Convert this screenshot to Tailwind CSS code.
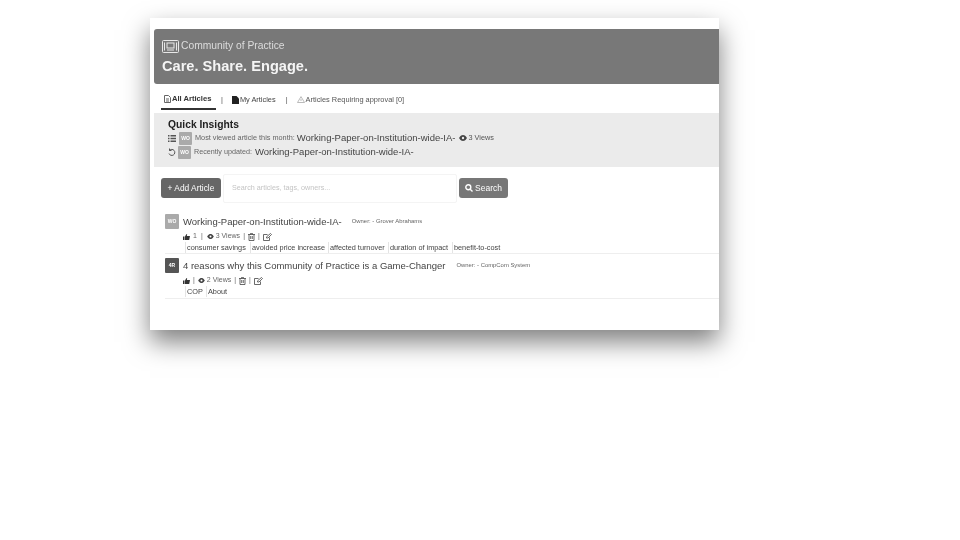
<!DOCTYPE html>
<html><head><meta charset="utf-8"><script src="https://cdn.jsdelivr.net/npm/@tailwindcss/browser@4"></script></head>
<body class="bg-white overflow-hidden">
<div class="w-[960px] h-[540px] pt-[18px] pl-[150px] font-['Liberation_Sans',sans-serif]">
<div class="w-[569px] h-[312px] bg-white shadow-[0_12px_24px_rgba(0,0,0,0.5)] pt-[11px] pl-[4px] blur-[0.7px] overflow-hidden">
  <div class="h-[55px] bg-[#787878] rounded-l-[3px] pl-[8px] pt-[9px] text-white">
    <div class="flex items-center gap-[2px] h-[16px] text-[10.300px] text-[#dcdcdc]">
      <svg width="17" height="13" viewBox="0 0 17 13" fill="none" stroke="#e8e8e8" stroke-width="1"><rect x=".5" y=".5" width="16" height="12" rx="1"/><path d="M2.500 2.500v8M14.500 2.500v8"/><rect x="5" y="3" width="7" height="5"/><path d="M5 10h7"/></svg>
      <span>Community of Practice</span>
    </div>
    <div class="text-[14.600px] leading-[18px] font-bold mt-[3px] text-[#f4f4f4]">Care. Share. Engage.</div>
  </div>
  <div class="flex items-end h-[26px] pl-[7px] text-[7.400px] text-[#444]">
    <div class="w-[55px] h-[20px] border-b-2 border-[#333] flex items-center pl-[3px] gap-[1px] font-bold text-[7.600px] text-[#333]">
      <svg width="7" height="8" viewBox="0 0 7 8" fill="none" stroke="#666"><path d="M.5.5h4l2 2v5h-6zM2 4h3M2 6h3"/></svg><span>All Articles</span>
    </div>
    <div class="h-[20px] flex items-center"><span class="ml-[5px] text-[#555]">|</span>
    <div class="ml-[9px] flex items-center gap-[1px]"><svg width="7" height="8" viewBox="0 0 7 8" fill="#222"><path d="M0 0h4.500l2.500 2.500V8H0z"/></svg><span>My Articles</span></div>
    <span class="ml-[10px] text-[#555]">|</span>
    <div class="ml-[9px] flex items-center gap-[1px] text-[#555]"><svg width="8" height="7" viewBox="0 0 8 7" fill="none" stroke="#aaa" stroke-width=".8"><path d="M4 .6 7.500 6.500h-7zM4 3v2"/></svg><span>Articles Requiring approval [0]</span></div></div>
  </div>
  <div class="h-[54px] bg-[#ebebeb] mt-[3px] pl-[14px] pt-[6px] text-[#333]">
    <div class="text-[10.300px] leading-[12px] font-bold text-[#222]">Quick Insights</div>
    <div class="flex items-center h-[14px]">
      <svg width="8" height="7" viewBox="0 0 8 7" fill="#555"><path d="M0 0h1.500v1.500H0zM2.500 0H8v1.500H2.500zM0 2.700h1.500v1.500H0zM2.500 2.700H8v1.500H2.500zM0 5.400h1.500v1.500H0zM2.500 5.400H8v1.500H2.500z"/></svg>
      <div class="w-[13px] h-[13px] rounded-[1px] bg-[#aaa] ml-[3px] text-[5px] leading-[13px] font-bold text-white text-center">WO</div>
      <span class="text-[7.300px] ml-[3px] text-[#666]">Most viewed article this month:</span>
      <span class="text-[9.500px] ml-[2px] text-[#444]">Working-Paper-on-Institution-wide-IA-</span>
      <svg class="ml-[3px]" width="8" height="6" viewBox="0 0 8 6" fill="#444"><path d="M0 3C1.500.6 2.800 0 4 0s2.500.6 4 3C6.500 5.400 5.200 6 4 6S1.500 5.400 0 3z"/><circle cx="4" cy="3" r="1.200" fill="#ebebeb"/></svg>
      <span class="text-[7.300px] ml-[2px] text-[#555]">3 Views</span>
    </div>
    <div class="flex items-center h-[14px]">
      <svg width="8" height="9" viewBox="0 0 8 9" fill="none" stroke="#555"><path d="M1.500 2.500A3 3 0 1 1 1 5.500M1.500.5v2h2"/></svg>
      <div class="w-[13px] h-[13px] rounded-[1px] bg-[#aaa] ml-[2px] text-[5px] leading-[13px] font-bold text-white text-center">WO</div>
      <span class="text-[7.200px] ml-[3px] text-[#666]">Recently updated:</span>
      <span class="text-[9.500px] ml-[3px] text-[#444]">Working-Paper-on-Institution-wide-IA-</span>
    </div>
  </div>
  <div class="flex items-center mt-[6px] pl-[7px] h-[30px]">
    <div class="w-[60px] h-[20px] rounded-[3px] bg-[#666] text-white text-[8.400px] leading-[20px] text-center">+ Add Article</div>
    <div class="w-[234px] h-[29px] ml-[2px] bg-white border border-[#f4f4f4] rounded-[2px] pl-[8px] text-[7.200px] leading-[26px] text-[#c4c4c4]">Search articles, tags, owners...</div>
    <div class="w-[49px] h-[20px] ml-[2px] rounded-[3px] bg-[#777] text-white text-[8.500px] flex items-center justify-center gap-[2px]">
      <svg width="8" height="8" viewBox="0 0 8 8" fill="none" stroke="#fff" stroke-width="1.400"><circle cx="3.300" cy="3.300" r="2.500"/><path d="M5.200 5.200 7.500 7.500"/></svg><span>Search</span>
    </div>
  </div>
  <div class="mt-[10px] ml-[11px] h-[41px] border-b border-[#eee]">
    <div class="flex items-start h-[17px]">
      <div class="w-[14px] h-[15px] rounded-[1px] bg-[#aaa] text-[5px] leading-[15px] font-bold text-white text-center mt-[1px]">WO</div>
      <span class="ml-[4px] text-[9.500px] leading-[15px] mt-[1px] text-[#444]">Working-Paper-on-Institution-wide-IA-</span>
      <span class="ml-[10px] mt-[2px] text-[5.900px] leading-[12px] text-[#666]">Owner: - Grover Abrahams</span>
    </div>
    <div class="flex items-center ml-[18px] h-[11px] mt-[1px] text-[7px] text-[#666] gap-[3px]">
      <svg width="7" height="6" viewBox="0 0 7 6" fill="#333"><path d="M0 2.500h1.500V6H0zM2 2.500 3.500 0l.7.4-.4 1.600H7l-.8 4H2z"/></svg><span>1</span><span class="ml-[1px]">|</span>
      <svg class="ml-[1px]" width="7" height="5" viewBox="0 0 8 6" fill="#444"><path d="M0 3C1.500.6 2.800 0 4 0s2.500.6 4 3C6.500 5.400 5.200 6 4 6S1.500 5.400 0 3z"/><circle cx="4" cy="3" r="1.200" fill="#fff"/></svg><span class="-ml-[1px]">3 Views</span><span>|</span>
      <svg width="7" height="8" viewBox="0 0 7 8" fill="none" stroke="#444" stroke-width=".8"><path d="M0 1.500h7M2.500 1.500V.4h2v1.100M1 1.500v6h5v-6M2.700 3v3M4.300 3v3"/></svg><span>|</span>
      <svg width="9" height="8" viewBox="0 0 9 8" fill="none" stroke="#444" stroke-width=".8"><path d="M6.500 4.500v3H.5v-6h4M3.500 5l.2-1.300L7.500.5l1 1L5 5z"/></svg>
    </div>
    <div class="flex items-center h-[11px] ml-[20px] whitespace-nowrap text-[7.300px] leading-[11px] text-[#444]">
      <span class="shrink-0 border-l border-[#e4e4e4] pl-[1px] w-[65px]">consumer savings</span>
      <span class="shrink-0 border-l border-[#e4e4e4] pl-[1px] w-[78px]">avoided price increase</span>
      <span class="shrink-0 border-l border-[#e4e4e4] pl-[1px] w-[60px]">affected turnover</span>
      <span class="shrink-0 border-l border-[#e4e4e4] pl-[1px] w-[64px]">duration of impact</span>
      <span class="shrink-0 border-l border-[#e4e4e4] pl-[1px]">benefit-to-cost</span>
    </div>
  </div>
  <div class="mt-[3px] ml-[11px] h-[42px] border-b border-[#eee]">
    <div class="flex items-start h-[17px]">
      <div class="w-[14px] h-[15px] rounded-[1px] bg-[#555] text-[5px] leading-[15px] font-bold text-white text-center mt-[1px]">4R</div>
      <span class="ml-[4px] text-[9.500px] leading-[15px] mt-[1px] text-[#444]">4 reasons why this Community of Practice is a Game-Changer</span>
      <span class="ml-[11px] mt-[2px] text-[5.900px] leading-[12px] text-[#666]">Owner: - CompCom System</span>
    </div>
    <div class="flex items-center ml-[18px] h-[11px] mt-[1px] text-[7px] text-[#666] gap-[3px]">
      <svg width="7" height="6" viewBox="0 0 7 6" fill="#333"><path d="M0 2.500h1.500V6H0zM2 2.500 3.500 0l.7.4-.4 1.600H7l-.8 4H2z"/></svg><span>|</span>
      <svg width="7" height="5" viewBox="0 0 8 6" fill="#444"><path d="M0 3C1.500.6 2.800 0 4 0s2.500.6 4 3C6.500 5.400 5.200 6 4 6S1.500 5.400 0 3z"/><circle cx="4" cy="3" r="1.200" fill="#fff"/></svg><span class="-ml-[1px]">2 Views</span><span>|</span>
      <svg width="7" height="8" viewBox="0 0 7 8" fill="none" stroke="#444" stroke-width=".8"><path d="M0 1.500h7M2.500 1.500V.4h2v1.100M1 1.500v6h5v-6M2.700 3v3M4.300 3v3"/></svg><span>|</span>
      <svg width="9" height="8" viewBox="0 0 9 8" fill="none" stroke="#444" stroke-width=".8"><path d="M6.500 4.500v3H.5v-6h4M3.500 5l.2-1.300L7.500.5l1 1L5 5z"/></svg>
    </div>
    <div class="flex items-center h-[11px] ml-[20px] whitespace-nowrap text-[7.300px] leading-[11px] text-[#444]">
      <span class="shrink-0 border-l border-[#e4e4e4] pl-[1px] w-[21px]">COP</span>
      <span class="shrink-0 border-l border-[#e4e4e4] pl-[1px]">About</span>
    </div>
  </div>
</div>
</div>
</body></html>
